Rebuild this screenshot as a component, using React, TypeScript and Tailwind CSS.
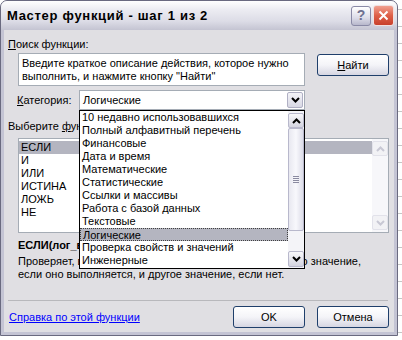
import React from "react";

const Chevron = ({ color = "#000" }: { color?: string }) => (
  <svg width="9" height="6" viewBox="0 0 9 6">
    <polyline points="1,1 4.5,4.5 8,1" fill="none" stroke={color} strokeWidth="2" />
  </svg>
);
const ChevronUp = ({ color = "#000" }: { color?: string }) => (
  <svg width="9" height="6" viewBox="0 0 9 6">
    <polyline points="1,5 4.5,1.5 8,5" fill="none" stroke={color} strokeWidth="2" />
  </svg>
);

const categories = [
  "10 недавно использовавшихся",
  "Полный алфавитный перечень",
  "Финансовые",
  "Дата и время",
  "Математические",
  "Статистические",
  "Ссылки и массивы",
  "Работа с базой данных",
  "Текстовые",
  "Логические",
  "Проверка свойств и значений",
  "Инженерные",
];

const funcs = ["ЕСЛИ", "И", "ИЛИ", "ИСТИНА", "ЛОЖЬ", "НЕ"];

function XpButton({ children, className = "" }: { children: React.ReactNode; className?: string }) {
  return (
    <div
      className={`h-[22px] w-[72px] rounded-[3px] border border-[#1f3f6b] bg-[linear-gradient(to_bottom,#ffffff,#f4f4f8_50%,#d6d6e2)] flex items-center justify-center text-[11px] text-black ${className}`}
    >
      {children}
    </div>
  );
}

export default function App() {
  return (
    <div className="relative w-[402px] h-[340px] overflow-hidden bg-white bg-[repeating-linear-gradient(to_bottom,transparent_0_9px,#c6c6c6_9px_10px,transparent_10px_17px)] font-['Liberation_Sans',Arial,sans-serif] text-[11px] leading-[13px] text-black">
      <div className="w-[398px] h-[336px] flex flex-col rounded-t-[7px] border border-[#6a6a80] overflow-hidden bg-[#c4c4d4]">
        {/* Title bar */}
        <div className="h-[29px] shrink-0 flex items-center pl-[6px] pr-[3px] bg-[linear-gradient(to_bottom,#ffffff,#ececf2_30%,#dcdce6_70%,#c4c4d2)]">
          <div className="flex-1 font-bold text-[13px] tracking-[0.7px] text-[#000]">Мастер функций - шаг 1 из 2</div>
          <div className="w-[20px] h-[20px] rounded-[3px] border border-[#8a8aa6] bg-[linear-gradient(to_bottom,#ffffff,#dcdce8_60%,#b8b8cc)] flex items-center justify-center font-bold text-[14px] text-[#6e7090]">
            ?
          </div>
          <div className="ml-[2px] w-[21px] h-[21px] rounded-[3px] border border-[#f0e0e0] bg-[linear-gradient(to_bottom,#f0a090,#de6048_50%,#c8402c)] flex items-center justify-center">
            <svg width="11" height="11" viewBox="0 0 11 11">
              <path d="M1.5 1.5 L9.5 9.5 M9.5 1.5 L1.5 9.5" stroke="#fff" strokeWidth="2" />
            </svg>
          </div>
        </div>
        {/* Body */}
        <div className="flex-1 mx-[3px] mb-[3px] bg-[#e0dfe3] flex flex-col pl-[4px] pt-[8px]">
          <div className="h-[13px]">
            <span className="underline">П</span>оиск функции:
          </div>
          <div className="flex mt-[2px]">
            <div className="ml-[10px] w-[287px] h-[33px] bg-white border border-[#a5acb5] px-[3px] pt-[3px] leading-[13px]">
              Введите краткое описание действия, которое нужно выполнить, и нажмите кнопку "Найти"
            </div>
            <XpButton className="ml-[12px] mt-[1px] w-[71px]">
              <span><span className="underline">Н</span>айти</span>
            </XpButton>
          </div>
          <div className="flex items-center mt-[4px] h-[20px]">
            <div className="ml-[9px] w-[62px]">
              <span className="underline">К</span>атегория:
            </div>
            <div className="relative w-[226px] h-[20px] bg-white border border-[#a5acb5] flex items-center">
              <div className="flex-1 pl-[3px]">Логические</div>
              <div className="mr-[1px] w-[16px] h-[16px] rounded-[2px] border border-[#b0b0c4] bg-[linear-gradient(to_bottom,#f4f4f8,#d8d8e4)] flex items-center justify-center">
                <Chevron />
              </div>
              {/* Dropdown list */}
              <div className="absolute left-[-1px] top-[19px] w-[226px] h-[159px] bg-white border border-black flex z-10">
                <div className="flex-1 flex flex-col">
                  {categories.map((c) => (
                    <div
                      key={c}
                      className={`h-[13px] pl-[2px] leading-[13px] whitespace-nowrap ${
                        c === "Логические" ? "bg-[#b4b5c0] border border-dotted border-[#404040] leading-[11px] pl-[1px]" : ""
                      }`}
                    >
                      {c}
                    </div>
                  ))}
                </div>
                <div className="w-[16px] flex flex-col bg-[#f4f4f8] pt-[2px] pb-[1px]">
                  <div className="h-[15px] rounded-[2px] border border-[#b8b8cc] bg-[linear-gradient(to_bottom,#f8f8fb,#d4d4e0)] flex items-center justify-center">
                    <ChevronUp />
                  </div>
                  <div className="h-[103px] rounded-[2px] border border-[#b8b8cc] bg-[linear-gradient(to_right,#e8e8f0,#f8f8fc_50%,#dcdce8)] flex items-center justify-center">
                    <div className="flex flex-col gap-[1px]">
                      <div className="w-[6px] h-[1px] bg-[#8a8aa0]" />
                      <div className="w-[6px] h-[1px] bg-[#8a8aa0]" />
                      <div className="w-[6px] h-[1px] bg-[#8a8aa0]" />
                      <div className="w-[6px] h-[1px] bg-[#8a8aa0]" />
                    </div>
                  </div>
                  <div className="flex-1" />
                  <div className="h-[16px] rounded-[2px] border border-[#b8b8cc] bg-[linear-gradient(to_bottom,#f8f8fb,#d4d4e0)] flex items-center justify-center">
                    <Chevron />
                  </div>
                </div>
              </div>
            </div>
          </div>
          <div className="mt-[10px] h-[13px]">
            Выберите <span className="underline">ф</span>ункцию:
          </div>
          <div className="ml-[10px] mt-[5px] w-[371px] h-[95px] bg-white border border-[#a5acb5] flex">
            <div className="flex-1 pt-[2px]">
              {funcs.map((f) => (
                <div key={f} className={`h-[13px] pl-[2px] ${f === "ЕСЛИ" ? "bg-[#b4b5c0]" : ""}`}>
                  {f}
                </div>
              ))}
            </div>
            <div className="w-[16px] flex flex-col bg-[#f7f7fa] py-[2px]">
              <div className="h-[15px] rounded-[2px] border border-[#e2e2ea] bg-[#f2f2f5] flex items-center justify-center">
                <ChevronUp color="#c8c8d4" />
              </div>
              <div className="flex-1" />
              <div className="h-[15px] rounded-[2px] border border-[#e2e2ea] bg-[#f2f2f5] flex items-center justify-center">
                <Chevron color="#c8c8d4" />
              </div>
            </div>
          </div>
          <div className="ml-[10px] mt-[6px] w-[287px] h-[13px] overflow-hidden whitespace-nowrap font-bold">
            ЕСЛИ(лог_выражение;значение_если_истина;значение_если_ложь)
          </div>
          <div className="ml-[10px] mt-[3px] leading-[13px]">
            Проверяет, выполняется ли условие, и возвращает одно значение,
            <br />
            если оно выполняется, и другое значение, если нет.
          </div>
          <div className="mt-[19px] w-[380px] h-[1px] bg-[#b8b8bc]" />
          <div className="flex items-center mt-[5px]">
            <div className="ml-[1px] flex-1 text-[#0000ff] underline">Справка по этой функции</div>
            <XpButton>OK</XpButton>
            <XpButton className="ml-[12px] mr-[5px]">Отмена</XpButton>
          </div>
        </div>
      </div>
    </div>
  );
}
